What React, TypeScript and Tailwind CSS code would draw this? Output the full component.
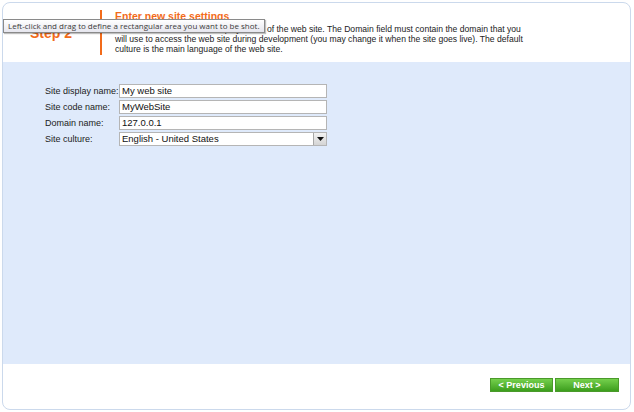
import React from "react";

const font = { fontFamily: '"Liberation Sans", Arial, sans-serif' };

function Field({ label, value }: { label: string; value: string }) {
  return (
    <div className="flex items-center h-[14px]">
      <div className="w-[74px] text-[9px] leading-none text-[#222]">{label}</div>
      <div className="w-[208px] h-[14px] border border-[#b5b5b5] bg-white flex items-center pl-[2px] text-[9.5px] text-[#111] leading-none">
        {value}
      </div>
    </div>
  );
}

export default function App() {
  return (
    <div className="w-[634px] h-[412px] bg-white p-[2px] pr-[3px] pb-[2px] relative" style={font}>
      <div className="h-full rounded-[8px] border border-[#cbd9ec] overflow-hidden flex flex-col bg-white">
        {/* header */}
        <div className="h-[59px] flex pt-[7px]">
          <div className="w-[97px] pl-[27px] pt-[16px]">
            <div className="text-[14px] font-bold text-[#f26b1a] leading-none">Step 2</div>
          </div>
          <div className="w-[2px] h-[45px] bg-[#f26b1a]" />
          <div className="pl-[13px] pt-0">
            <div className="text-[10.5px] font-bold text-[#f26b1a] leading-[12px]">Enter new site settings</div>
            <div className="text-[8.6px] text-[#222] leading-[10px] mt-[2px] whitespace-nowrap">
              <div>Please enter the new site display name of the web site. The Domain field must contain the domain that you</div>
              <div>will use to access the web site during development (you may change it when the site goes live). The default</div>
              <div>culture is the main language of the web site.</div>
            </div>
          </div>
        </div>
        {/* body */}
        <div className="flex-1 bg-[#dfeafb] pl-[42px] pt-[22px] flex flex-col gap-[2px]">
          <Field label="Site display name:" value="My web site" />
          <Field label="Site code name:" value="MyWebSite" />
          <Field label="Domain name:" value="127.0.0.1" />
          <div className="flex items-center h-[14px]">
            <div className="w-[74px] text-[9px] leading-none text-[#222]">Site culture:</div>
            <div className="w-[208px] h-[14px] border border-[#b5b5b5] bg-white flex items-center text-[9.5px] text-[#111] leading-none">
              <div className="flex-1 pl-[2px]">English - United States</div>
              <div className="w-[13px] h-[12px] bg-gradient-to-b from-[#f2f2f2] to-[#d4d4d4] border-l border-[#a8a8a8] flex items-center justify-center">
                <svg width="7" height="4" viewBox="0 0 7 4"><path d="M0 0h7L3.5 4z" fill="#111" /></svg>
              </div>
            </div>
          </div>
        </div>
        {/* footer */}
        <div className="h-[45px] flex justify-end items-start pt-[14px] pr-[11px] gap-[2px]">
          <button className="w-[63px] h-[14px] bg-gradient-to-b from-[#74d04c] to-[#3c9e1c] border border-[#4a9a2a] text-white text-[9px] font-bold leading-none flex items-center justify-center">
            &lt; Previous
          </button>
          <button className="w-[64px] h-[14px] bg-gradient-to-b from-[#74d04c] to-[#3c9e1c] border border-[#4a9a2a] text-white text-[9px] font-bold leading-none flex items-center justify-center">
            Next &gt;
          </button>
        </div>
      </div>
      {/* tooltip overlay */}
      <div className="absolute left-[3px] top-[19px] h-[14px] px-[4px] flex items-center border border-[#8a8a8a] bg-gradient-to-b from-white to-[#e6e6ee] text-[8px] text-[#3a3a3a] leading-none shadow-[1px_1px_1px_rgba(0,0,0,0.25)] whitespace-nowrap" style={{ fontFamily: '"Open Sans", "Liberation Sans", sans-serif' }}>
        Left-click and drag to define a rectangular area you want to be shot.
      </div>
    </div>
  );
}
